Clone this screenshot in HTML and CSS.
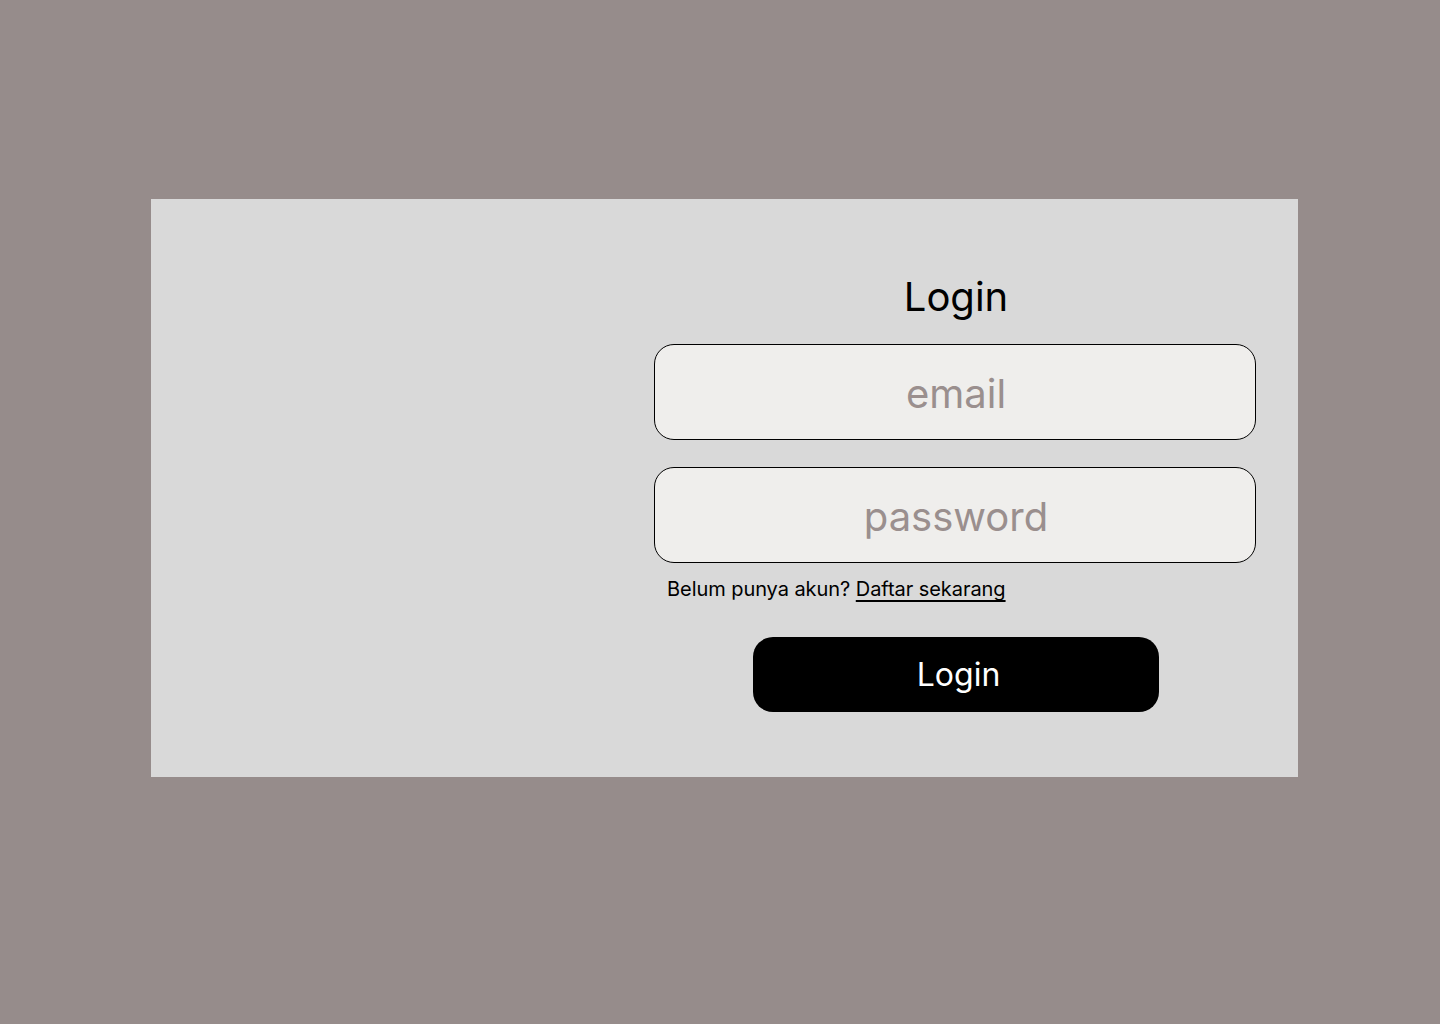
FILE: index.html
```html
<!DOCTYPE html>
<html lang="id">
<head>
<meta charset="utf-8">
<title>Login</title>
<link rel="stylesheet" href="styles.css">
</head>
<body>
<main class="page">
  <section class="card">
    <div class="card-side"></div>
    <form class="login-form">
      <h1 class="title">Login</h1>
      <input class="field" type="email" placeholder="email">
      <input class="field field-pass" type="password" placeholder="password">
      <p class="hint">Belum punya akun? <a class="hint-link" href="#">Daftar sekarang</a></p>
      <button class="btn" type="button">Login</button>
    </form>
  </section>
</main>
</body>
</html>
```

FILE: styles.css
```css
* { box-sizing: border-box; }
html, body {
  margin: 0;
  padding: 0;
  background: #968c8b;
  font-family: "Inter", "Noto Sans", sans-serif;
}
.page {
  width: 1440px;
  height: 1024px;
  padding: 199px 142px 0 151px;
}
.card {
  width: 1147px;
  height: 578px;
  background: #d9d9d9;
  display: grid;
  grid-template-columns: 503px 602px;
  padding-top: 73px;
}
.login-form {
  display: flex;
  flex-direction: column;
  align-items: center;
  margin: 0;
}
.title {
  margin: 1px 0 0;
  padding-left: 2px;
  font-size: 40px;
  font-weight: 400;
  line-height: 48px;
  color: #000;
  text-align: center;
}
.field {
  width: 602px;
  height: 96px;
  margin-top: 23px;
  border: 1px solid #000;
  border-radius: 20px;
  background: #efeeec;
  font-family: "Inter", "Noto Sans", sans-serif;
  font-size: 40px;
  text-align: center;
  color: #000;
  outline: none;
  padding: 2px 19px 0 21px;
}
.field::placeholder { color: #9a8f8e; opacity: 1; }
.field-pass { margin-top: 27px; }
.hint {
  align-self: flex-start;
  margin: 14px 0 0 13px;
  font-size: 20px;
  line-height: 24px;
  letter-spacing: -0.06px;
  color: #000;
}
.hint-link {
  color: #000;
  text-decoration: underline;
  text-underline-offset: 4px;
}
.btn {
  margin: 36px 0 0 2px;
  width: 406px;
  height: 75px;
  border: none;
  border-radius: 20px;
  background: #000;
  color: #fff;
  font-family: "Inter", "Noto Sans", sans-serif;
  font-size: 32px;
  padding: 0 0 0 5px;
}
```
